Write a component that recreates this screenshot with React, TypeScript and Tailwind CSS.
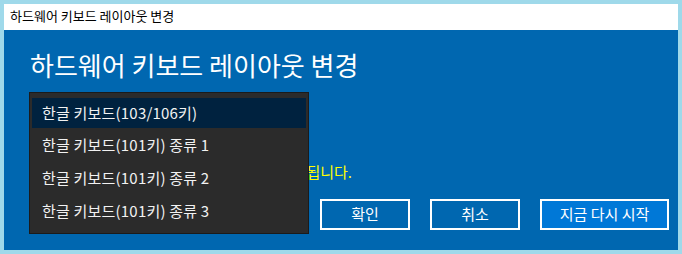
const font = { fontFamily: '"Noto Sans CJK KR", "Noto Sans", sans-serif' };

const layouts = [
  "한글 키보드(103/106키)",
  "한글 키보드(101키) 종류 1",
  "한글 키보드(101키) 종류 2",
  "한글 키보드(101키) 종류 3",
];

export default function App() {
  return (
    <div className="h-[254px] w-[682px] bg-[#9fd9ea] p-[4px]" style={font}>
      <div className="flex h-[26px] items-center bg-white pb-[2px] pl-[6px] text-[13px] text-black">
        하드웨어 키보드 레이아웃 변경
      </div>
      <div className="relative flex h-[220px] flex-col bg-[#0067b0] pl-[26px] pr-[9px]">
        <h1 className="mt-[17px] text-[26px] leading-[36px] text-white">하드웨어 키보드 레이아웃 변경</h1>

        <div className="mt-[79px] flex w-[322px] justify-end whitespace-nowrap text-[15px] leading-[20px] text-[#ffff00]">
          변경 내용은 다시 시작한 후에 적용됩니다.
        </div>

        <div className="mt-auto mb-[20px] flex justify-end gap-[20px] text-[15px] text-white">
          <button className="h-[31px] w-[90px] border-2 border-white">확인</button>
          <button className="h-[31px] w-[90px] border-2 border-white">취소</button>
          <button className="h-[31px] w-[129px] border-2 border-white bg-[#0078d7]">지금 다시 시작</button>
        </div>

        <div className="absolute left-[25px] top-[62px] w-[280px] border border-[#1b1b1b] bg-[#2b2b2b] pb-[5px] pl-[2px] pr-[2px] pt-[3px]">
          {layouts.map((name, i) => (
            <div key={name} className="flex h-[33px] flex-col py-[1px] first:pt-[2px]">
              <div
                className={
                  "flex flex-1 items-center pl-[10px] text-[15px] tracking-[0.2px] text-[#f2f2f2] " +
                  (i === 0 ? "bg-[#00223f]" : "")
                }
              >
                {name}
              </div>
            </div>
          ))}
        </div>
      </div>
    </div>
  );
}
